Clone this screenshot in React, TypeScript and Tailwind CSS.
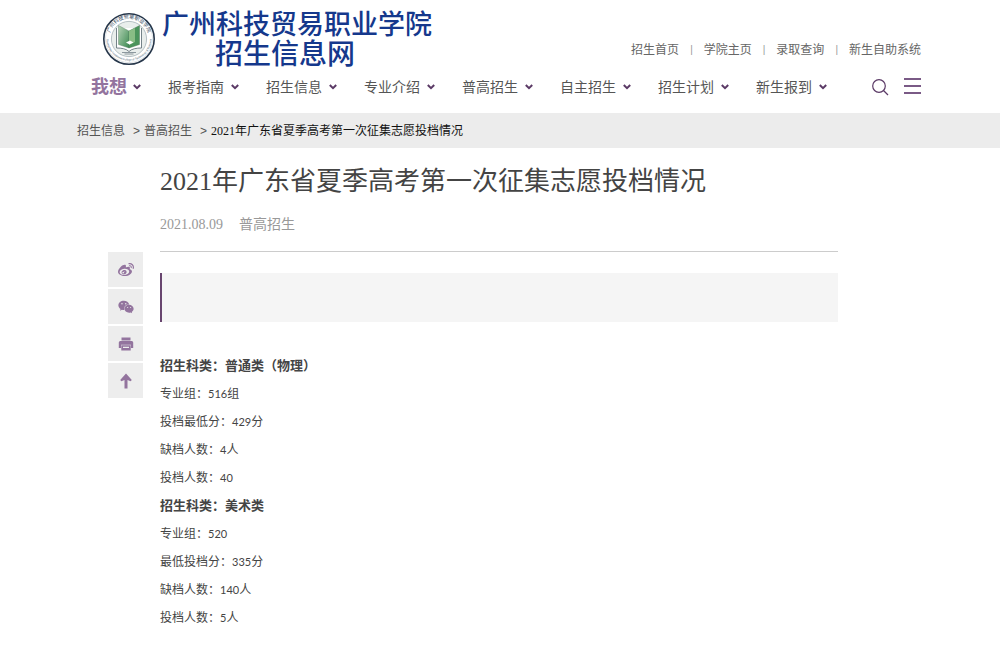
import React from 'react';
import { FaWeibo, FaWeixin } from 'react-icons/fa';

const topLinks = ['招生首页', '学院主页', '录取查询', '新生自助系统'];
const navItems = ['报考指南', '招生信息', '专业介绍', '普高招生', '自主招生', '招生计划', '新生报到'];

const groups = [
  {
    heading: '招生科类：普通类（物理）',
    rows: [
      ['专业组：', '516', '组'],
      ['投档最低分：', '429', '分'],
      ['缺档人数：', '4', '人'],
      ['投档人数：', '40', ''],
    ],
  },
  {
    heading: '招生科类：美术类',
    rows: [
      ['专业组：', '520', ''],
      ['最低投档分：', '335', '分'],
      ['缺档人数：', '140', '人'],
      ['投档人数：', '5', '人'],
    ],
  },
];

function Printer({ className }: { className?: string }) {
  return (
    <svg viewBox="0 0 16 16" className={className} fill="currentColor" aria-hidden="true">
      <path d="M3.500 1.500h9v3h-9z" />
      <path d="M2.300 5h11.400a1.500 1.500 0 0 1 1.500 1.500V12H13V8.800H3V12H.8V6.500A1.500 1.500 0 0 1 2.300 5z" />
      <path fillRule="evenodd" d="M3.300 9.300h9.400V14.500H3.300zM5 10.800v1.200h6v-1.200z" />
    </svg>
  );
}

function UpArrow({ className }: { className?: string }) {
  return (
    <svg viewBox="0 0 16 16" className={className} fill="currentColor" aria-hidden="true">
      <path d="M8 0.500l5.800 6.500-1.200 1.300L9.500 7V15.500h-3V7L3.400 8.300 2.200 7z" />
    </svg>
  );
}

const sideButtons = [
  { label: '微博', Icon: FaWeibo },
  { label: '微信', Icon: FaWeixin },
  { label: '打印', Icon: Printer },
  { label: '返回顶部', Icon: UpArrow },
];

function Chevron() {
  return (
    <svg viewBox="0 0 8 6" className="h-1.5 w-2 shrink-0" fill="none" stroke="#5b3a66" strokeWidth="2" aria-hidden="true">
      <path d="M0.8 1 L4 4.2 L7.2 1" />
    </svg>
  );
}

function Crest() {
  return (
    <svg viewBox="0 0 54 54" className="size-[54px] shrink-0" role="img" aria-label="校徽">
      <defs>
        <path id="arc-top" d="M7.5 30 A19.8 19.8 0 1 1 46.5 30" />
        <path id="arc-bottom" d="M4.5 24 A22.6 22.6 0 1 0 49.5 24" />
        <linearGradient id="page" x1="0" x2="1" y1="0" y2="1">
          <stop offset="0" stopColor="#b5d3b6" />
          <stop offset="1" stopColor="#3d8a52" />
        </linearGradient>
      </defs>
      <circle cx="27" cy="27" r="25.2" fill="#fff" stroke="#26364a" strokeWidth="1.6" />
      <circle cx="27" cy="27" r="23.6" fill="none" stroke="#c3cad0" strokeWidth="0.5" />
      <circle cx="27" cy="27" r="17.6" fill="#e9eeec" stroke="#9aa7ae" strokeWidth="0.7" />
      <text fontSize="5" fill="#34495c">
        <textPath href="#arc-top" startOffset="50%" textAnchor="middle">广州科技贸易职业学院</textPath>
      </text>
      <text fontSize="2.7" fill="#42586a">
        <textPath href="#arc-bottom" startOffset="50%" textAnchor="middle">Guangzhou Vocational College of Technology &amp; Business</textPath>
      </text>
      <path d="M14.500 16v20c5 0 10 .8 12.500 3.500 2.500-2.700 7.500-3.500 12.500-3.500V16" fill="#fff" stroke="#66757d" strokeWidth="0.9" />
      <path d="M16.500 13.500l10.500 5.500v17l-10.500-3.500z" fill="url(#page)" stroke="#587b65" strokeWidth="0.4" />
      <path d="M37.500 13.500l-10.500 5.500v17l10.500-3.500z" fill="#4b945c" stroke="#3e704b" strokeWidth="0.4" />
      <path d="M27 19l6-3v14l-6 3z" fill="#89bd85" />
      <path d="M24 30.500l4-2 3.500 2-4 2z" fill="#fff" />
      <path d="M20 40.500h14M22.500 42h9" stroke="#73818a" strokeWidth="0.8" />
    </svg>
  );
}

export default function App() {
  return (
    <div className="min-h-screen bg-white font-['Liberation_Sans','Noto_Sans_CJK_SC',sans-serif] text-[#444]">
      <header className="mx-auto max-w-[848px]">
        <div className="flex justify-between pt-3 pr-[3px] pl-[26px]">
          <a href="#home" className="flex items-start gap-1.5 text-[#15388c]">
            <Crest />
            <span className="-mt-1 flex flex-col items-center font-['Noto_Sans_CJK_SC',sans-serif] font-medium">
              <span className="text-[27px] leading-[30px]">广州科技贸易职业学院</span>
              <span className="pr-6 text-[28px] leading-7">招生信息网</span>
            </span>
          </a>
          <ul className="flex items-center self-end pb-2 text-xs leading-4 text-[#666]">
            {topLinks.map((t, i) => (
              <li key={t} className="flex items-center">
                {i > 0 && <span className="mx-[11px] text-[10px] text-[#999]">|</span>}
                <a href="#link">{t}</a>
              </li>
            ))}
          </ul>
        </div>
        <nav className="flex h-[47px] items-center pr-[3px] pb-1.5 pl-[15px]">
          <ul className="flex items-center gap-[27px] text-sm text-[#555]">
            <li>
              <button type="button" className="flex items-center gap-1.5 text-lg font-bold text-[#93749e]">
                我想
                <Chevron />
              </button>
            </li>
            {navItems.map((t) => (
              <li key={t}>
                <button type="button" className="flex items-center gap-[7px] whitespace-nowrap">
                  {t}
                  <Chevron />
                </button>
              </li>
            ))}
          </ul>
          <div className="ml-auto flex items-center gap-[15px]">
            <button type="button" aria-label="搜索">
              <svg viewBox="0 0 18 18" className="size-[18px]" fill="none" stroke="#5b3a66" strokeWidth="1.2">
                <circle cx="8" cy="8" r="6.300" />
                <path d="M12.500 12.500l4.500 4.500" />
              </svg>
            </button>
            <button type="button" aria-label="菜单">
              <svg viewBox="0 0 17 18" className="h-[18px] w-[17px]" stroke="#7a5a86" strokeWidth="2">
                <path d="M0 1h17M0 8h17M0 15h17" />
              </svg>
            </button>
          </div>
        </nav>
      </header>

      <div className="bg-[#ececec]">
        <nav aria-label="面包屑" className="mx-auto flex h-[35px] max-w-[848px] items-center px-px text-xs text-[#555]">
          <a href="#info">招生信息</a>
          <span className="mr-1 ml-2">&gt;</span>
          <a href="#general">普高招生</a>
          <span className="mr-1 ml-2">&gt;</span>
          <span className="font-['Liberation_Serif','Noto_Sans_CJK_SC',serif] text-[#111]">
            2021年广东省夏季高考第一次征集志愿投档情况
          </span>
        </nav>
      </div>

      <div className="mx-auto flex max-w-[784px] items-start gap-[17px] pr-[54px]">
        <aside className="mt-[104px] flex flex-col gap-0.5 text-[#93749e]">
          {sideButtons.map(({ label, Icon }) => (
            <button key={label} type="button" aria-label={label} className="flex size-[35px] items-center justify-center bg-[#ededed]">
              <Icon className="size-4" />
            </button>
          ))}
        </aside>

        <main className="min-w-0 flex-1 pt-3.5 pb-5">
          <h1 className="font-['Liberation_Serif','Noto_Sans_CJK_SC',serif] text-[26px] leading-10 text-[#444]">
            2021年广东省夏季高考第一次征集志愿投档情况
          </h1>
          <div className="flex gap-4 border-b border-[#ccc] pt-[13px] pb-4 font-['Liberation_Serif','Noto_Sans_CJK_SC',serif] text-sm leading-5 text-[#999]">
            <time dateTime="2021-08-09">2021.08.09</time>
            <span>普高招生</span>
          </div>
          <div className="mt-[21px] h-[49px] border-l-2 border-[#68456f] bg-[#f5f5f5]" />
          <div className="mt-[30px] text-xs leading-7">
            {groups.map((g) => (
              <section key={g.heading}>
                <h2 className="text-[13px] leading-7 font-bold">{g.heading}</h2>
                {g.rows.map(([label, value, unit]) => (
                  <p key={label}>
                    {label}
                    <span className="font-['Lato',sans-serif] text-[11px]">{value}</span>
                    {unit}
                  </p>
                ))}
              </section>
            ))}
          </div>
        </main>
      </div>
    </div>
  );
}
